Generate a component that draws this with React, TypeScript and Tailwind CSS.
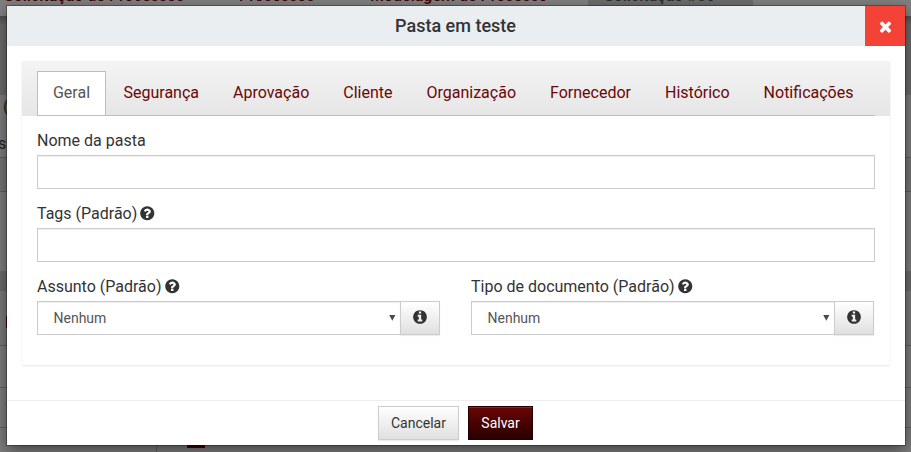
import type { ReactNode } from "react";

const CIRCLE =
  "M1664 896q0 209-103 385.5t-279.5 279.5-385.5 103-385.5-103-279.5-279.5-103-385.5 103-385.5 279.5-279.5 385.5-103 385.5 103 279.5 279.5 103 385.5z";

const QUESTION =
  "M1024 1376v-192q0-14-9-23t-23-9h-192q-14 0-23 9t-9 23v192q0 14 9 23t23 9h192q14 0 23-9t9-23zm256-672q0-88-55.5-163t-138.5-116-170-41q-243 0-371 213-15 24 8 42l132 100q7 6 19 6 16 0 25-12 53-68 86-92 34-24 86-24 48 0 85.5 26t37.5 59q0 38-20 61t-68 45q-63 28-115.5 86.5t-52.5 125.5v36q0 14 9 23t23 9h192q14 0 23-9t9-23q0-19 21.5-49.5t54.5-49.5q32-18 49-28.5t46-35 44.5-48 28-60.5 12.5-81z";

const INFO =
  "M1152 1376v-160q0-14-9-23t-23-9h-96v-512q0-14-9-23t-23-9h-320q-14 0-23 9t-9 23v160q0 14 9 23t23 9h96v320h-96q-14 0-23 9t-9 23v160q0 14 9 23t23 9h448q14 0 23-9t9-23zM1024 480v-160q0-14-9-23t-23-9h-192q-14 0-23 9t-9 23v160q0 14 9 23t23 9h192q14 0 23-9t9-23z";

const TIMES =
  "M1490 1322q0 40-28 68l-136 136q-28 28-68 28t-68-28l-294-294-294 294q-28 28-68 28t-68-28l-136-136q-28-28-28-68t28-68l294-294-294-294q-28-28-28-68t28-68l136-136q28-28 68-28t68 28l294 294 294-294q28-28 68-28t68 28l136 136q28 28 28 68t-28 68l-294 294 294 294q28 28 28 68z";

function Icon({ d, size = "size-4" }: { d: string; size?: string }) {
  return (
    <svg viewBox="0 0 1792 1792" className={`shrink-0 ${size}`} fill="currentColor" fillRule="evenodd">
      <path d={d} />
    </svg>
  );
}

function Label({ children, help }: { children: ReactNode; help?: boolean }) {
  return (
    <div className="flex h-6 items-center gap-[2px] text-base leading-6 text-[#333]">
      <span className="whitespace-nowrap">{children}</span>
      {help && <Icon d={CIRCLE + QUESTION} size="-mt-px size-[16.5px]" />}
    </div>
  );
}

function TextField() {
  return (
    <input className="mt-[2px] block h-[34px] w-full border border-[#ccc] bg-white px-4 shadow-[inset_0_1px_1px_rgba(0,0,0,0.075)] outline-none" />
  );
}

function SelectField({ label }: { label: string }) {
  return (
    <div className="w-[403px]">
      <Label help>{label}</Label>
      <div className="mt-[2px] flex h-[34px]">
        <div className="flex flex-1 items-center justify-between border border-r-0 border-[#ccc] bg-white pr-1 pl-[15.5px] text-sm text-[#555] shadow-[inset_0_1px_1px_rgba(0,0,0,0.075)]">
          <span>Nenhum</span>
          <svg viewBox="0 0 7 6" className="h-[6px] w-[7px]" fill="#4a4a4a">
            <path d="M0.2 0h6.2L3.3 5.8z" />
          </svg>
        </div>
        <button className="flex w-10 items-center justify-center border border-[#ccc] bg-linear-to-b from-white to-[#e0e0e0] pr-px pb-[2px] text-[#333] shadow-[0_1px_1px_rgba(0,0,0,0.075)]">
          <Icon d={CIRCLE + INFO} />
        </button>
      </div>
    </div>
  );
}

const tabs = ["Segurança", "Aprovação", "Cliente", "Organização", "Fornecedor", "Histórico", "Notificações"];

function BackTab({ title, width, active }: { title: string; width: string; active?: boolean }) {
  return (
    <div
      className={`flex h-[17px] shrink-0 items-end ${width} ${
        active ? "bg-[#6d6d6d] text-[#2a2a2a]" : "text-[#400000]"
      }`}
    >
      <div className="flex h-[31px] items-start gap-[14px] text-base leading-[20px] font-medium whitespace-nowrap">
        <span>{title}</span>
        <span className="font-normal text-[#555]">×</span>
      </div>
    </div>
  );
}

function Backdrop() {
  return (
    <div className="flex h-[452px] flex-col bg-[#7b7b7b]">
      <div className="flex h-[17px] shrink-0 border-b border-[#505050] bg-[#808080] pl-[4px]">
        <BackTab title="Solicitação de Processos" width="w-[235px]" />
        <BackTab title="Processos" width="w-[131px]" />
        <BackTab title="Modelagem de Processo" width="w-[218px] pr-[16px]" />
        <BackTab title="Solicitação #80" width="w-[165px] pl-[16px]" active />
      </div>
      <div className="h-[78px] shrink-0 bg-linear-to-b from-[#505050] to-[#6c6c6c] to-10%" />
      <div className="h-[63px] shrink-0 overflow-hidden border-b border-[#606060] bg-[#7e7e7e] text-base leading-6 text-[#222]">
        <div className="h-[37px] pl-[3px]">(</div>
        <div className="-ml-[2px]">s</div>
      </div>
      <div className="h-[34px] shrink-0 border-b border-[#606060] bg-[#777]" />
      <div className="h-[79px] shrink-0 bg-[#7e7e7e]" />
      <div className="h-5 shrink-0 bg-[#6c6c6c]" />
      <div className="flex h-[55px] shrink-0 items-center border-b border-[#53606b] bg-[#7b7b7b] pt-[8px] pl-[6px]">
        <div className="h-3 w-3 bg-[#400000]" />
      </div>
      <div className="h-[42px] shrink-0 border-b border-[#606060] bg-[#7e7e7e]" />
      <div className="h-10 shrink-0 border-b border-[#606060] bg-[#7e7e7e]" />
      <div className="flex flex-1 bg-[#7e7e7e]">
        <div className="w-[157px] border-r border-[#606060]" />
        <div className="ml-[30px] h-5 w-[18px] bg-[#400000]" />
      </div>
    </div>
  );
}

export default function App() {
  return (
    <div className="relative h-[452px] w-[911px] overflow-hidden font-['Roboto',sans-serif]">
      <Backdrop />
      <div className="absolute top-[6px] left-[7px] flex h-[439px] w-[898px] flex-col bg-white shadow-[0_0_0_1px_rgba(0,0,0,0.3),0_5px_15px_rgba(0,0,0,0.5)]">
        <header className="flex h-10 shrink-0 bg-[#eaeef1]">
          <h1 className="flex flex-1 items-center justify-center pl-[39px] text-lg font-medium text-[#333]">
            Pasta em teste
          </h1>
          <button className="flex w-10 items-center justify-center bg-[#f44336] text-white">
            <Icon d={TIMES} size="size-[17px]" />
          </button>
        </header>

        <main className="mx-[15px] mt-[15px] h-[304px] shrink-0 shadow-[0_1px_2px_rgba(0,0,0,0.1)]">
          <nav className="h-[55px] bg-linear-to-b from-[#f4f4f4] to-[#e6e6e6] px-[15px] pt-[10px]">
            <div className="flex h-[45px] border-b border-[#b4bfcb] text-base text-[#6a0606]">
              <div className="-mb-px flex h-[44px] w-[69px] shrink-0 items-center justify-center border border-b-0 border-[#b4bfcb] bg-white pb-px text-[#555]">
                Geral
              </div>
              <div className="flex gap-[34px] pl-[17.5px]">
                {tabs.map((t) => (
                  <span key={t} className="flex h-11 items-center whitespace-nowrap">
                    {t}
                  </span>
                ))}
              </div>
            </div>
          </nav>
          <div className="px-[15px] pt-[13px]">
            <Label>Nome da pasta</Label>
            <TextField />
            <div className="mt-[13px]">
              <Label help>Tags (Padrão)</Label>
              <TextField />
            </div>
            <div className="mt-[13px] flex gap-[31px]">
              <SelectField label="Assunto (Padrão)" />
              <SelectField label="Tipo de documento (Padrão)" />
            </div>
          </div>
        </main>

        <footer className="mt-[35px] flex flex-1 justify-center gap-[9px] border-t border-[#eee] pt-[5px] pr-[1px] text-sm">
          <button className="h-[34px] w-[81px] border border-[#ccc] bg-linear-to-b from-white to-[#e0e0e0] text-[#333] shadow-[0_1px_1px_rgba(0,0,0,0.075)]">
            Cancelar
          </button>
          <button className="h-[34px] w-[65px] border border-[#250000] bg-linear-to-b from-[#6b0606] to-[#2a0000] text-white shadow-[inset_0_1px_0_rgba(255,255,255,0.15)]">
            Salvar
          </button>
        </footer>
      </div>
    </div>
  );
}
